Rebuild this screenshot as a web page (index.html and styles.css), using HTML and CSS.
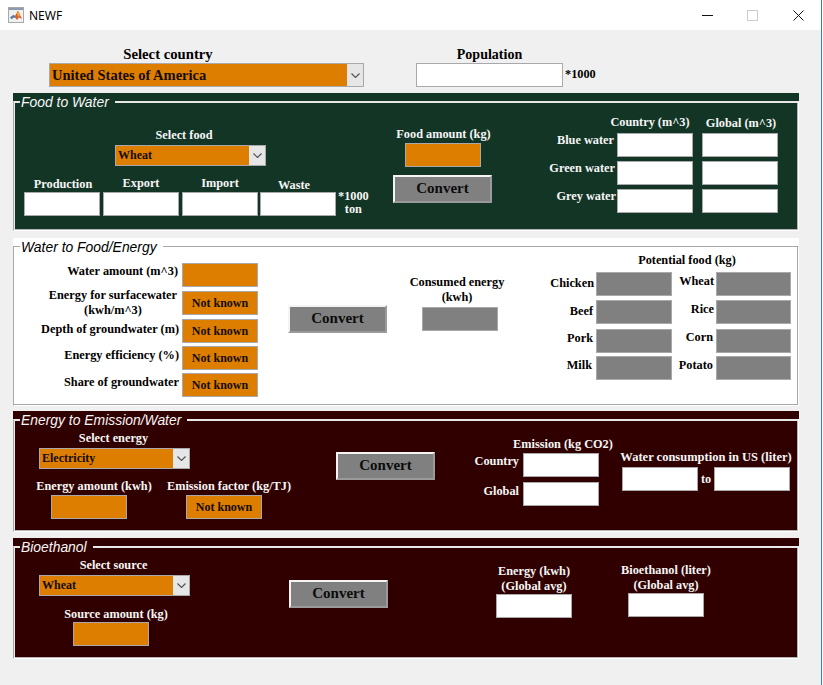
FILE: index.html
```html
<!DOCTYPE html>
<html lang="en">

<head>
  <meta charset="UTF-8" />
  <title>NEWF</title>
  <link rel="stylesheet" href="styles.css">
</head>

<body>
  <div class="window">

    <!-- Title bar -->
    <div class="title-bar">
      <svg class="app-icon" width="16" height="16" viewBox="0 0 16 16">
        <rect x="0.5" y="0.5" width="15" height="15" fill="#eef0f2" stroke="#a8a8a8" />
        <rect x="1" y="1" width="14" height="2" fill="#8a9bb0" />
        <path d="M2 10.5 L5.5 8 L7 9 L10 3.5 L14 12 L11 10.5 L9 13 L7 10.5 L5 10.5 Z" fill="#d9622b" />
        <path d="M2 10.5 L5.5 8 L7 9 L7 10.5 L5 10.5 L4 12.5 Z" fill="#3a7fc4" />
        <path d="M10 3.5 L12 8 L10.5 10 L9 7 Z" fill="#f0a93a" />
      </svg>
      <span class="app-name">NEWF</span>
      <div class="win-controls">
        <svg class="win-min" width="11" height="1" viewBox="0 0 11 1"><rect width="11" height="1" fill="#111" /></svg>
        <svg class="win-max" width="11" height="11" viewBox="0 0 11 11"><rect x="0.5" y="0.5" width="10" height="10" fill="none" stroke="#ccc" /></svg>
        <svg class="win-close" width="11" height="11" viewBox="0 0 11 11"><path d="M0.5 0.5 L10.5 10.5 M10.5 0.5 L0.5 10.5" stroke="#111" fill="none" /></svg>
      </div>
    </div>

    <div class="content">

      <!-- Country and population -->
      <div class="top-row">
        <div class="country-col">
          <div class="big-label country-label">Select country</div>
          <div class="dropdown dropdown-big">
            <span class="dropdown-text">United States of America</span>
            <span class="dropdown-btn"><svg width="9" height="5" viewBox="0 0 9 5"><path d="M0.5 0.5 L4.5 4.5 L8.5 0.5" fill="none" stroke="#555" stroke-width="1.2" /></svg></span>
          </div>
        </div>
        <div class="population-col">
          <div class="big-label population-label">Population</div>
          <div class="field population-field"></div>
        </div>
        <div class="label population-unit">*1000</div>
      </div>

      <!-- Food to Water -->
      <section class="panel panel-green food-panel">
        <div class="panel-title">Food to Water</div>
        <div class="panel-body">
          <div class="food-left">
            <div class="label food-select-label">Select food</div>
            <div class="dropdown food-select">
              <span class="dropdown-text">Wheat</span>
              <span class="dropdown-btn"><svg width="9" height="5" viewBox="0 0 9 5"><path d="M0.5 0.5 L4.5 4.5 L8.5 0.5" fill="none" stroke="#555" stroke-width="1.2" /></svg></span>
            </div>
            <div class="stock-row">
              <div class="stock-col">
                <div class="label stock-production">Production</div>
                <div class="field"></div>
              </div>
              <div class="stock-col">
                <div class="label stock-export">Export</div>
                <div class="field"></div>
              </div>
              <div class="stock-col">
                <div class="label stock-import">Import</div>
                <div class="field"></div>
              </div>
              <div class="stock-col">
                <div class="label stock-waste">Waste</div>
                <div class="field"></div>
              </div>
              <div class="label stock-unit">*1000<br>ton</div>
            </div>
          </div>
          <div class="food-mid">
            <div class="label food-amount-label">Food amount (kg)</div>
            <div class="field field-orange food-amount"></div>
            <button class="convert-btn food-convert">Convert</button>
          </div>
          <div class="footprint">
            <div class="footprint-head">
              <div class="label head-country">Country (m^3)</div>
              <div class="label head-global">Global (m^3)</div>
            </div>
            <div class="footprint-row">
              <div class="label row-label blue-label">Blue water</div>
              <div class="field"></div>
              <div class="field"></div>
            </div>
            <div class="footprint-row">
              <div class="label row-label green-label">Green water</div>
              <div class="field"></div>
              <div class="field"></div>
            </div>
            <div class="footprint-row">
              <div class="label row-label">Grey water</div>
              <div class="field"></div>
              <div class="field"></div>
            </div>
          </div>
        </div>
      </section>

      <!-- Water to Food/Energy -->
      <section class="panel panel-white water-panel">
        <div class="panel-title">Water to Food/Energy</div>
        <div class="panel-body">
          <div class="water-inputs">
            <div class="input-row row-water">
              <div class="label input-label">Water amount (m^3)</div>
              <div class="field field-orange"></div>
            </div>
            <div class="input-row row-surface">
              <div class="label input-label surface-label">Energy for surfacewater<br>(kwh/m^3)</div>
              <div class="field field-orange">Not known</div>
            </div>
            <div class="input-row row-depth">
              <div class="label input-label">Depth of groundwater (m)</div>
              <div class="field field-orange">Not known</div>
            </div>
            <div class="input-row row-efficiency">
              <div class="label input-label">Energy efficiency (%)</div>
              <div class="field field-orange">Not known</div>
            </div>
            <div class="input-row row-share">
              <div class="label input-label">Share of groundwater</div>
              <div class="field field-orange">Not known</div>
            </div>
          </div>
          <button class="convert-btn water-convert">Convert</button>
          <div class="consumed">
            <div class="label">Consumed energy<br>(kwh)</div>
            <div class="field field-gray consumed-field"></div>
          </div>
          <div class="potential">
            <div class="label potential-title">Potential food (kg)</div>
            <div class="food-grid">
              <div class="label grid-label l-chicken">Chicken</div>
              <div class="field field-gray"></div>
              <div class="label grid-label l-wheat">Wheat</div>
              <div class="field field-gray"></div>
              <div class="label grid-label l-beef">Beef</div>
              <div class="field field-gray"></div>
              <div class="label grid-label l-rice">Rice</div>
              <div class="field field-gray"></div>
              <div class="label grid-label l-pork">Pork</div>
              <div class="field field-gray"></div>
              <div class="label grid-label l-corn">Corn</div>
              <div class="field field-gray"></div>
              <div class="label grid-label l-milk">Milk</div>
              <div class="field field-gray"></div>
              <div class="label grid-label l-potato">Potato</div>
              <div class="field field-gray"></div>
            </div>
          </div>
        </div>
      </section>

      <!-- Energy to Emission/Water -->
      <section class="panel panel-maroon energy-panel">
        <div class="panel-title">Energy to Emission/Water</div>
        <div class="panel-body">
          <div class="energy-left">
            <div class="label energy-select-label">Select energy</div>
            <div class="dropdown maroon-select">
              <span class="dropdown-text">Electricity</span>
              <span class="dropdown-btn"><svg width="9" height="5" viewBox="0 0 9 5"><path d="M0.5 0.5 L4.5 4.5 L8.5 0.5" fill="none" stroke="#555" stroke-width="1.2" /></svg></span>
            </div>
            <div class="energy-fields">
              <div class="energy-amount">
                <div class="label">Energy amount (kwh)</div>
                <div class="field field-orange"></div>
              </div>
              <div class="emission-factor">
                <div class="label">Emission factor (kg/TJ)</div>
                <div class="field field-orange">Not known</div>
              </div>
            </div>
          </div>
          <button class="convert-btn energy-convert">Convert</button>
          <div class="emission">
            <div class="label emission-title">Emission (kg CO2)</div>
            <div class="emission-row row-country">
              <div class="label">Country</div>
              <div class="field"></div>
            </div>
            <div class="emission-row row-global">
              <div class="label">Global</div>
              <div class="field"></div>
            </div>
          </div>
          <div class="consumption">
            <div class="label consumption-title">Water consumption in US (liter)</div>
            <div class="consumption-row">
              <div class="field"></div>
              <div class="label">to</div>
              <div class="field"></div>
            </div>
          </div>
        </div>
      </section>

      <!-- Bioethanol -->
      <section class="panel panel-maroon bio-panel">
        <div class="panel-title">Bioethanol</div>
        <div class="panel-body">
          <div class="bio-left">
            <div class="label energy-select-label">Select source</div>
            <div class="dropdown maroon-select">
              <span class="dropdown-text">Wheat</span>
              <span class="dropdown-btn"><svg width="9" height="5" viewBox="0 0 9 5"><path d="M0.5 0.5 L4.5 4.5 L8.5 0.5" fill="none" stroke="#555" stroke-width="1.2" /></svg></span>
            </div>
            <div class="label source-label">Source amount (kg)</div>
            <div class="field field-orange source-field"></div>
          </div>
          <button class="convert-btn bio-convert">Convert</button>
          <div class="bio-energy">
            <div class="label">Energy (kwh)<br>(Global avg)</div>
            <div class="field"></div>
          </div>
          <div class="bio-liter">
            <div class="label">Bioethanol (liter)<br>(Global avg)</div>
            <div class="field"></div>
          </div>
        </div>
      </section>

    </div>
  </div>
</body>

</html>
```

FILE: styles.css
```css
:root {
  --orange: #de7e00;
  --gray: #808080;
  --green: #133526;
  --maroon: #300000;
  --window: #f0f0f0;
  --field-border: #a9a9ad;
}

* {
  box-sizing: border-box;
}

html,
body {
  margin: 0;
  padding: 0;
  height: 100%;
  background: #fff;
  overflow: hidden;
}

body {
  font-family: "Liberation Serif", serif;
  font-weight: bold;
  font-size: 12px;
  color: #000;
}

.window {
  width: 822px;
  height: 685px;
  background: var(--window);
  border-right: 1px solid #2f7fc8;
}

/* title bar */
.title-bar {
  display: flex;
  align-items: center;
  height: 30px;
  background: #fff;
  padding-left: 8px;
}

.app-icon {
  margin-right: 5px;
}

.app-name {
  font-family: "Noto Sans", sans-serif;
  font-weight: normal;
  font-size: 12px;
  color: #000;
}

.win-controls {
  display: flex;
  align-items: center;
  margin-left: auto;
  padding-right: 17px;
}

.win-max {
  margin-left: 34px;
}

.win-close {
  margin-left: 35px;
}

/* shared widgets */
.label {
  font-size: 12.3px;
  line-height: 15px;
  text-align: center;
  white-space: nowrap;
}

.big-label {
  font-size: 14.7px;
  line-height: 17px;
  text-align: center;
}

.field {
  flex: none;
  width: 76px;
  height: 24px;
  background: #fff;
  border: 1px solid var(--field-border);
  font-size: 12px;
  line-height: 22px;
  text-align: center;
  color: #140c00;
}

.field-orange {
  background: var(--orange);
}

.field-gray {
  background: var(--gray);
}

.dropdown {
  display: flex;
  width: 151px;
  height: 21px;
  background: var(--orange);
  border: 1px solid var(--field-border);
}

.dropdown-text {
  flex: 1;
  padding-left: 2px;
  font-size: 12px;
  line-height: 19px;
  color: #140c00;
}

.dropdown-btn {
  display: flex;
  align-items: center;
  justify-content: center;
  width: 16px;
  background: #e6e6e6;
}

.dropdown-big {
  width: 315px;
  height: 24px;
}

.dropdown-big .dropdown-text {
  font-size: 14.5px;
  line-height: 22px;
}

.convert-btn {
  display: block;
  flex: none;
  width: 99px;
  height: 28px;
  padding: 0 0 2px;
  background: var(--gray);
  border: 2px solid;
  border-color: #f4f4f4 #9a9a9a #9a9a9a #f4f4f4;
  font-family: inherit;
  font-weight: bold;
  font-size: 15px;
  color: #0c0c0c;
}

/* top row */
.top-row {
  display: flex;
  height: 63px;
  padding-left: 49px;
}

.country-col {
  width: 315px;
  padding-top: 16px;
}

.country-label {
  padding-right: 77px;
}

.population-col {
  width: 147px;
  margin-left: 52px;
  padding-top: 16px;
}

.population-label {
  font-size: 14px;
}

.population-field {
  width: 147px;
}

.population-unit {
  margin: 37px 0 0 2px;
}

/* panels */
.panel {
  position: relative;
  width: 786px;
  margin-left: 13px;
  padding-top: 8px;
}

.panel-body {
  display: flex;
  height: 100%;
  padding: 2px 1px 1px;
  border: 1px solid;
  border-color: #e8e8e8 #fff #fff #a8a8a8;
  box-shadow: inset 1px 1px 0 #e8e8e8, inset -1px -1px 0 #b4b4b4;
}

.panel-body > * {
  flex: none;
}

.panel-title {
  position: absolute;
  top: 2px;
  left: 7px;
  padding: 0 6px 0 1px;
  font-family: "Liberation Sans", sans-serif;
  font-weight: normal;
  font-style: italic;
  font-size: 13.9px;
  line-height: 15px;
}

.panel-green {
  background: var(--green);
  color: #f6f6f6;
}

.panel-green .panel-title {
  background: var(--green);
}

.panel-maroon {
  background: var(--maroon);
  color: #f6f6f6;
}

.panel-maroon .panel-title {
  background: var(--maroon);
}

.panel-white {
  background: #fff;
  color: #000;
}

.panel-white .panel-title {
  background: #fff;
  color: #000;
}

.panel-white .panel-body {
  padding-top: 1px;
  border-color: #a8a8a8 #fff #fff #a8a8a8;
  box-shadow: inset -1px -1px 0 #a8a8a8;
}

.food-panel {
  height: 138px;
}

.water-panel {
  height: 168px;
  margin-top: 7px;
}

.energy-panel {
  height: 121px;
  margin-top: 5px;
}

.bio-panel {
  height: 121px;
  margin-top: 6px;
}

/* food to water */
.food-left {
  width: 344px;
  margin-left: 9px;
  padding-top: 24px;
}

.food-select-label {
  width: 151px;
  margin-left: 91px;
  padding-right: 13px;
}

.food-select {
  margin: 2px 0 0 91px;
}

.stock-row {
  display: flex;
  margin-top: 10px;
}

.stock-col {
  display: flex;
  flex-direction: column;
  justify-content: flex-end;
  width: 76px;
  margin-right: 3px;
  height: 40px;
}

.stock-col:nth-child(3) {
  margin-right: 2px;
}

.stock-col:nth-child(4) {
  margin-right: 2px;
}

.stock-production {
  padding-left: 2px;
}

.stock-export {
  margin-bottom: 1px;
}

.stock-import {
  margin-bottom: 1px;
}

.stock-waste {
  padding-right: 8px;
  margin-bottom: -1px;
}

.stock-unit {
  align-self: flex-end;
  line-height: 13px;
}

.food-mid {
  display: flex;
  flex-direction: column;
  align-items: center;
  width: 99px;
  margin: 23px 0 0 25px;
}

.food-amount-label {
  padding-left: 2px;
}

.food-amount {
  margin-top: 1px;
}

.food-convert {
  margin-top: 8px;
}

.footprint {
  width: 253px;
  margin: 11px 0 0 33px;
}

.footprint-head {
  display: flex;
  margin-left: 80px;
  height: 18px;
}

.head-country {
  flex: none;
  width: 90px;
}

.head-global {
  flex: none;
  width: 90px;
  margin: 1px 0 0 1px;
}

.footprint-row {
  display: flex;
  justify-content: flex-end;
  height: 28px;
}

.footprint-row .field + .field {
  margin-left: 9px;
}

.row-label {
  margin-right: 1px;
  line-height: 14px;
}

.blue-label {
  margin-right: 3px;
}

.green-label {
  margin-right: 2px;
}

/* water to food/energy */
.water-inputs {
  width: 243px;
  padding-top: 15px;
}

.input-row {
  display: flex;
  justify-content: flex-end;
  height: 24px;
}

.input-label {
  margin-right: 3px;
}

.row-water .input-label {
  margin-top: 1px;
  margin-right: 4px;
}

.row-surface,
.row-depth {
  margin-top: 4px;
}

.row-efficiency,
.row-share {
  margin-top: 3px;
}

.row-depth .input-label {
  margin-top: 3px;
}

.row-efficiency .input-label,
.row-share .input-label {
  margin-top: 2px;
}

.surface-label {
  margin-top: -3px;
  margin-right: 5px;
}

.water-convert {
  margin: 57px 0 0 30px;
}

.consumed {
  display: flex;
  flex-direction: column;
  align-items: center;
  width: 100px;
  margin: 27px 0 0 20px;
}

.consumed-field {
  margin: 2px 0 0 6px;
}

.potential {
  width: 244px;
  margin: 4px 0 0 41px;
}

.potential-title {
  padding-left: 34px;
  height: 20px;
  line-height: 16px;
}

.food-grid {
  display: grid;
  grid-template-columns: 48px 76px 44px 75px;
  grid-template-rows: 28px 29px 27px 24px;
}

.food-grid .field:nth-child(4n) {
  width: 75px;
}

.grid-label {
  text-align: right;
  padding-right: 2px;
}

.l-chicken,
.l-beef {
  padding-top: 4px;
}

.l-beef,
.l-pork {
  padding-right: 3px;
}

.l-pork,
.l-wheat,
.l-rice,
.l-milk,
.l-potato {
  padding-top: 2px;
}

.l-milk {
  padding-right: 4px;
}

.l-corn {
  padding-top: 1px;
}

.l-corn,
.l-potato {
  padding-right: 3px;
}

/* energy panel */
.energy-left {
  width: 250px;
  margin-left: 24px;
  padding-top: 9px;
}

.energy-select-label {
  width: 151px;
  padding-right: 2px;
}

.maroon-select {
  margin-top: 2px;
}

.energy-fields {
  display: flex;
  margin-top: 10px;
}

.energy-amount {
  display: flex;
  flex: none;
  flex-direction: column;
  align-items: center;
  width: 120px;
  margin-left: -5px;
}

.emission-factor {
  display: flex;
  flex: none;
  flex-direction: column;
  align-items: center;
  width: 122px;
  margin-left: 14px;
}

.energy-amount .field,
.emission-factor .field {
  margin: 1px 10px 0 0;
}

.energy-convert {
  margin: 30px 0 0 47px;
}

.emission {
  width: 123px;
  margin: 15px 0 0 41px;
}

.emission-title {
  width: 100px;
  margin-left: 37px;
}

.emission-row {
  display: flex;
  justify-content: flex-end;
}

.emission-row .label {
  margin-right: 4px;
  line-height: 16px;
}

.row-country {
  margin-top: 1px;
}

.row-global {
  margin-top: 5px;
}

.row-global .label {
  margin-top: 1px;
}

.consumption {
  display: flex;
  flex-direction: column;
  align-items: center;
  width: 168px;
  margin: 28px 0 0 23px;
}

.consumption-title {
  font-size: 12.5px;
}

.consumption-row {
  display: flex;
  justify-content: space-between;
  align-items: center;
  width: 168px;
  margin-top: 2px;
}

/* bioethanol panel */
.bio-left {
  width: 250px;
  margin-left: 24px;
  padding-top: 9px;
}

.source-label {
  width: 151px;
  margin-top: 11px;
  padding-left: 3px;
}

.source-field {
  margin-left: 34px;
}

.bio-convert {
  margin: 31px 0 0 0;
}

.bio-energy {
  display: flex;
  flex-direction: column;
  align-items: center;
  width: 76px;
  margin: 15px 0 0 108px;
}

.bio-liter {
  display: flex;
  flex-direction: column;
  align-items: center;
  width: 76px;
  margin: 14px 0 0 56px;
}
```
